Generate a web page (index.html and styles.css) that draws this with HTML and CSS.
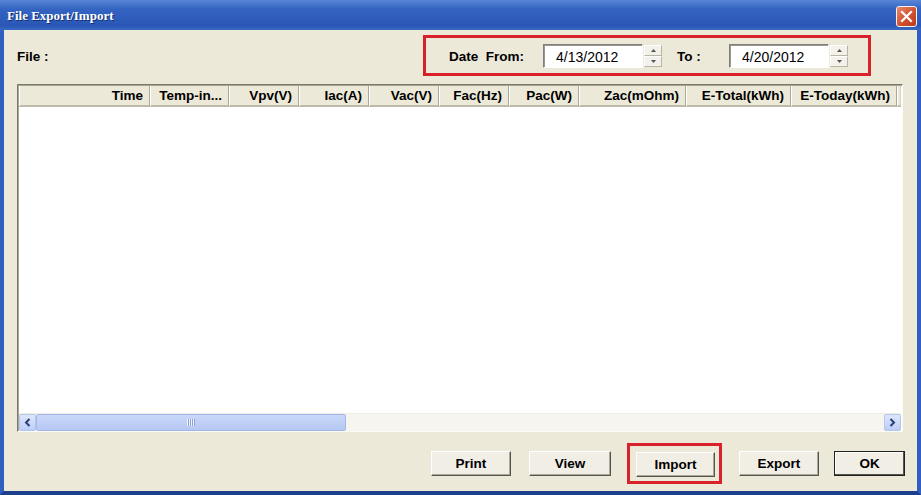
FILE: index.html
```html
<!DOCTYPE html>
<html lang="en">
<head>
  <meta charset="UTF-8">
  <title>File Export/Import</title>
  <meta name="viewport" content="width=device-width, initial-scale=1.0">
  <link rel="stylesheet" href="styles.css">
</head>
<body>

<div class="window">
  <div class="titlebar">
    <span class="title">File Export/Import</span>
    <button class="close" aria-label="Close">
      <svg width="13" height="13" viewBox="0 0 13 13">
        <path d="M2 2 L11 11 M11 2 L2 11" stroke="#fff" stroke-width="2.2" stroke-linecap="square"/>
      </svg>
    </button>
  </div>

  <div class="client">
    <div class="top-row">
      <span class="file-label">File :</span>

      <div class="date-box">
        <span class="lbl lbl-from">Date&nbsp;&nbsp;From:</span>
        <div class="date-input">4/13/2012</div>
        <div class="spin">
          <span class="spin-btn"><svg width="5" height="3" viewBox="0 0 5 3"><path d="M0 3 L2.5 0 L5 3Z" fill="#555"/></svg></span>
          <span class="spin-btn"><svg width="5" height="3" viewBox="0 0 5 3"><path d="M0 0 L2.5 3 L5 0Z" fill="#555"/></svg></span>
        </div>
        <span class="lbl lbl-to">To :</span>
        <div class="date-input">4/20/2012</div>
        <div class="spin">
          <span class="spin-btn"><svg width="5" height="3" viewBox="0 0 5 3"><path d="M0 3 L2.5 0 L5 3Z" fill="#555"/></svg></span>
          <span class="spin-btn"><svg width="5" height="3" viewBox="0 0 5 3"><path d="M0 0 L2.5 3 L5 0Z" fill="#555"/></svg></span>
        </div>
      </div>
    </div>

    <div class="list">
      <div class="list-header">
        <div class="col">Time</div>
        <div class="col">Temp-in...</div>
        <div class="col">Vpv(V)</div>
        <div class="col">Iac(A)</div>
        <div class="col">Vac(V)</div>
        <div class="col">Fac(Hz)</div>
        <div class="col">Pac(W)</div>
        <div class="col">Zac(mOhm)</div>
        <div class="col">E-Total(kWh)</div>
        <div class="col">E-Today(kWh)</div>
        <div class="col col-rest"></div>
      </div>
      <div class="list-body"></div>
      <div class="hscroll">
        <div class="sb-arrow">
          <svg width="7" height="9" viewBox="0 0 7 9"><path d="M5.5 1 L2 4.5 L5.5 8" fill="none" stroke="#2a3f7a" stroke-width="2"/></svg>
        </div>
        <div class="sb-thumb">
          <span class="grip"></span>
        </div>
        <div class="sb-track"></div>
        <div class="sb-arrow">
          <svg width="7" height="9" viewBox="0 0 7 9"><path d="M1.5 1 L5 4.5 L1.5 8" fill="none" stroke="#2a3f7a" stroke-width="2"/></svg>
        </div>
      </div>
    </div>

    <div class="actions">
      <button class="btn btn-print">Print</button>
      <button class="btn btn-view">View</button>
      <div class="mark">
        <button class="btn btn-import">Import</button>
      </div>
      <button class="btn btn-export">Export</button>
      <button class="btn btn-ok">OK</button>
    </div>
  </div>
</div>

</body>
</html>
```

FILE: styles.css
```css
:root {
  --face: #ece9d8;
  --title-top: #5a86d6;
  --title-mid: #3464c2;
  --title-bottom: #2a57b6;
  --frame: #2f5fc0;
  --mark: #d8212a;
  --text: #000;
}

body {
  margin: 0;
  overflow: hidden;
  font-family: 'Liberation Sans', Arial, sans-serif;
  color: var(--text);
}

.window {
  width: 921px;
  height: 495px;
  display: flex;
  flex-direction: column;
}

.titlebar {
  height: 30px;
  flex-shrink: 0;
  display: flex;
  align-items: center;
  padding: 0 4px 0 7px;
  background: linear-gradient(var(--title-top), var(--title-mid) 30%, var(--title-bottom) 85%, #3a69c4);
  box-sizing: border-box;
}

.title {
  font-family: 'Liberation Serif', 'Times New Roman', serif;
  font-weight: bold;
  font-size: 13px;
  color: #fff;
  text-shadow: 1px 1px 0 #142f73;
  padding-top: 1px;
}

.close {
  margin-left: auto;
  width: 21px;
  height: 21px;
  padding: 0;
  border: 1px solid #f4f4f4;
  border-radius: 3px;
  background: linear-gradient(135deg, #e88a6c, #d0502f 55%, #b83a1e);
  display: flex;
  align-items: center;
  justify-content: center;
  margin-top: 2px;
}

.client {
  flex: 1;
  display: flex;
  flex-direction: column;
  background: var(--face);
  border: 4px solid var(--frame);
  border-top: 0;
  border-bottom-color: #1e3f8e;
}

/* top row */
.top-row {
  display: flex;
  align-items: center;
  padding: 5px 46px 0 13px;
  height: 41px;
}

.file-label {
  font-weight: bold;
  font-size: 13.5px;
  padding-top: 2px;
}

.date-box {
  margin-left: auto;
  height: 41px;
  box-sizing: border-box;
  border: 3px solid var(--mark);
  display: flex;
  align-items: center;
  padding: 0 20px 0 23px;
}

.lbl {
  font-weight: bold;
  font-size: 13.5px;
  padding-top: 2px;
}

.lbl-from {
  width: 94px;
}

.lbl-to {
  width: 52px;
  margin-left: 15px;
}

.date-input {
  width: 100px;
  height: 24px;
  box-sizing: border-box;
  background: #fff;
  border: 1px solid;
  border-color: #7f7f7f #fff #fff #7f7f7f;
  box-shadow: inset 1px 1px 0 #9a988c;
  font-size: 14px;
  line-height: 22px;
  padding-left: 12px;
  padding-top: 1px;
}

.spin {
  width: 18px;
  height: 22px;
  margin-left: 1px;
  display: flex;
  flex-direction: column;
}

.spin-btn {
  flex: 1;
  display: flex;
  align-items: center;
  justify-content: center;
  background: #f3f1e9;
  border: 1px solid;
  border-color: #fff #b8b5a6 #b8b5a6 #fff;
}

/* list view */
.list {
  margin: 8px 14px 0 13px;
  height: 348px;
  box-sizing: border-box;
  display: flex;
  flex-direction: column;
  border: 1px solid;
  border-color: #7b786c #fafaf6 #fafaf6 #7b786c;
  box-shadow: inset 1px 1px 0 #a8a597;
  padding: 1px 1px 0 1px;
  background: #fff;
}

.list-header {
  display: grid;
  grid-template-columns: 131px 79px 70px 70px 70px 70px 70px 107px 105px 106px 1fr;
  height: 21px;
  background: var(--face);
  border-bottom: 2px solid #bdbaa9;
  box-sizing: border-box;
}

.col {
  font-weight: bold;
  font-size: 13.5px;
  line-height: 20px;
  text-align: right;
  padding-right: 6px;
  white-space: nowrap;
  border-right: 1px solid #aca899;
  box-shadow: inset 1px 0 0 #fff;
}

.col-rest {
  padding: 0;
  border-right: 1px solid #d5d2c3;
}

.list-body {
  flex: 1;
  background: #fff;
}

.hscroll {
  height: 17px;
  display: flex;
  background: #f6f5ef;
  border-top: 1px solid #efede4;
}

.sb-arrow {
  width: 17px;
  box-sizing: border-box;
  display: flex;
  align-items: center;
  justify-content: center;
  background: linear-gradient(#dde7fc, #bccdf6);
  border: 1px solid #b5c6ee;
  border-radius: 2px;
}

.sb-thumb {
  width: 310px;
  box-sizing: border-box;
  background: linear-gradient(#cad8fb, #b6c8f2);
  border: 1px solid #a4b7e6;
  border-radius: 2px;
  display: flex;
  align-items: center;
  justify-content: center;
}

.grip {
  width: 8px;
  height: 7px;
  background: repeating-linear-gradient(90deg, #eef3ff 0 1px, #8ea4d8 1px 2px);
}

.sb-track {
  flex: 1;
}

/* buttons */
.actions {
  display: flex;
  align-items: center;
  justify-content: flex-end;
  height: 41px;
  margin-top: 11px;
  padding-right: 12px;
}

.btn {
  height: 25px;
  padding: 0;
  font-family: 'Liberation Sans', Arial, sans-serif;
  font-weight: bold;
  font-size: 13.5px;
  color: #000;
  background: #f1efe5;
  border: 1px solid;
  border-color: #fff #55544d #55544d #fff;
  box-shadow: inset -1px -1px 0 #aca899;
}

.btn-print { width: 80px; }
.btn-view { width: 82px; margin-left: 18px; }
.btn-import { width: 79px; }
.btn-export { width: 80px; margin-left: 17px; }

.btn-ok {
  width: 71px;
  margin-left: 15px;
  border-color: #222;
  box-shadow: inset -1px -1px 0 #55544d, inset 1px 1px 0 #fff;
}

.mark {
  margin-left: 16px;
  height: 41px;
  box-sizing: border-box;
  border: 3px solid var(--mark);
  display: flex;
  align-items: center;
  padding: 2px 4px 0 6px;
}
```
